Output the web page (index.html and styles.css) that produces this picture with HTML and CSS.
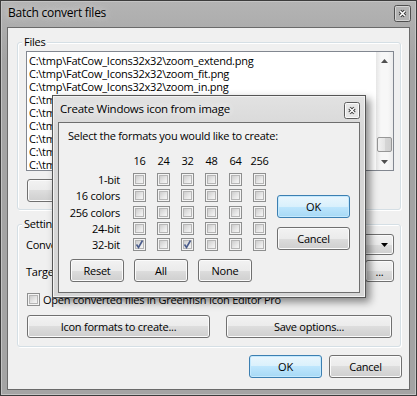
FILE: index.html
```html
<!DOCTYPE html>
<html lang="en">
<head>
    <meta charset="UTF-8">
    <title>Batch convert files</title>
    <link rel="stylesheet" href="styles.css">
</head>
<body>

<div class="window">
    <div class="titlebar">
        <span class="title">Batch convert files</span>
        <span class="close-btn">
            <svg width="17" height="17" viewBox="0 0 17 17">
                <rect x="0.5" y="0.5" width="16" height="16" rx="2" fill="#b3b3b3" stroke="#4f4f4f"/>
                <rect x="1.5" y="1.5" width="14" height="14" rx="1" fill="none" stroke="#d4d4d4"/>
                <path d="M6 6l5 5M11 6l-5 5" stroke="#3a3a3a" stroke-width="3.4"/>
                <path d="M6 6l5 5M11 6l-5 5" stroke="#fff" stroke-width="1.6"/>
            </svg>
        </span>
    </div>

    <div class="client">
        <div class="group files-group">
            <span class="group-title">Files</span>
            <div class="listbox">
                <div class="list-items">
                    <div>C:\tmp\FatCow_Icons32x32\zoom_extend.png</div>
                    <div>C:\tmp\FatCow_Icons32x32\zoom_fit.png</div>
                    <div>C:\tmp\FatCow_Icons32x32\zoom_in.png</div>
                    <div>C:\tmp\FatCow_Icons32x32\zoom_layer.png</div>
                    <div>C:\tmp\FatCow_Icons32x32\zoom_out.png</div>
                    <div>C:\tmp\FatCow_Icons32x32\zoom_refresh.png</div>
                    <div>C:\tmp\FatCow_Icons32x32\zoom_selection.png</div>
                    <div>C:\tmp\FatCow_Icons32x32\zoom_to_actual.png</div>
                    <div>C:\tmp\FatCow_Icons32x32\zones.png</div>
                </div>
                <div class="scrollbar">
                    <div class="sb-arrow">
                        <svg width="7" height="4" viewBox="0 0 7 4"><path d="M0 4L3.5 0L7 4Z" fill="#505050"/></svg>
                    </div>
                    <div class="sb-space"></div>
                    <div class="sb-thumb"></div>
                    <div class="sb-arrow">
                        <svg width="7" height="4" viewBox="0 0 7 4"><path d="M0 0L3.5 4L7 0Z" fill="#505050"/></svg>
                    </div>
                </div>
            </div>
            <div class="files-buttons">
                <button class="btn add-btn">Add files...</button>
            </div>
        </div>

        <div class="group settings-group">
            <span class="group-title">Settings</span>
            <div class="field-row">
                <span class="field-label">Convert to:</span>
                <div class="btn combo">
                    <span class="combo-text">Windows icon (*.ico)</span>
                    <svg width="7" height="4" viewBox="0 0 7 4"><path d="M0 0L3.5 4L7 0Z" fill="#000"/></svg>
                </div>
            </div>
            <div class="field-row target-row">
                <span class="field-label">Target folder:</span>
                <div class="textbox">C:\tmp\converted</div>
                <button class="btn browse-btn">...</button>
            </div>
            <div class="check-row">
                <span class="checkbox"></span>
                <span>Open converted files in Greenfish Icon Editor Pro</span>
            </div>
            <div class="settings-buttons">
                <button class="btn formats-btn">Icon formats to create...</button>
                <button class="btn save-btn">Save options...</button>
            </div>
        </div>

        <div class="footer">
            <button class="btn default">OK</button>
            <button class="btn">Cancel</button>
        </div>
    </div>

    <div class="dialog">
        <div class="dlg-titlebar">
            <span class="title">Create Windows icon from image</span>
            <span class="dlg-close">
                <svg width="16" height="17" viewBox="0 0 16 17">
                    <rect x="0.5" y="0.5" width="15" height="16" rx="2" fill="#e6e6e6" stroke="#5c5c5c"/>
                    <rect x="1.5" y="1.5" width="13" height="14" rx="1" fill="none" stroke="#fafafa"/>
                    <path d="M5.5 6l5 5M10.5 6l-5 5" stroke="#3a3a3a" stroke-width="3.2"/>
                    <path d="M5.5 6l5 5M10.5 6l-5 5" stroke="#fff" stroke-width="1.5"/>
                </svg>
            </span>
        </div>
        <div class="dlg-client">
            <div class="dlg-text">Select the formats you would like to create:</div>
            <div class="dlg-main">
                <div class="fmt-grid" id="fmtGrid">
                    <span></span>
                    <span class="col-head">16</span>
                    <span class="col-head">24</span>
                    <span class="col-head">32</span>
                    <span class="col-head">48</span>
                    <span class="col-head">64</span>
                    <span class="col-head">256</span>
                </div>
                <div class="dlg-side">
                    <button class="btn default">OK</button>
                    <button class="btn">Cancel</button>
                </div>
            </div>
            <div class="dlg-buttons">
                <button class="btn">Reset</button>
                <button class="btn">All</button>
                <button class="btn">None</button>
            </div>
        </div>
    </div>
</div>

<script>
    document.addEventListener("DOMContentLoaded", function() {
        const rows = ["1-bit", "16 colors", "256 colors", "24-bit", "32-bit"];
        const checked = { "32-bit": [0, 2] };
        const grid = document.getElementById("fmtGrid");

        rows.forEach(name => {
            let label = document.createElement("span");
            label.className = "row-label";
            label.textContent = name;
            grid.appendChild(label);

            for (let i = 0; i < 6; i++) {
                let cell = document.createElement("span");
                cell.className = "cell";
                let box = document.createElement("span");
                box.className = "checkbox";
                if ((checked[name] || []).includes(i)) {
                    box.classList.add("checked");
                    box.innerHTML = '<svg width="11" height="11" viewBox="0 0 11 11"><path d="M2.5 5.5L4.5 8.5L8.5 1.5" fill="none" stroke="#4a5c8c" stroke-width="1.6"/></svg>';
                }
                cell.appendChild(box);
                grid.appendChild(cell);
            }
        });
    });
</script>

</body>
</html>
```

FILE: styles.css
```css
body {
    margin: 0;
    font-family: 'Open Sans', 'Noto Sans', sans-serif;
    font-size: 11px;
    letter-spacing: -0.25px;
    color: #000;
    background: #fff;
}
.window {
    position: relative;
    width: 417px;
    height: 396px;
    box-sizing: border-box;
    border: 1px solid #3c3c3c;
    background: linear-gradient(#b4b4b4, #a4a4a4 60px, #a4a4a4);
    box-shadow: inset 0 0 0 1px #c4c4c4;
    padding: 0 6px 5px 6px;
    display: flex;
    flex-direction: column;
}
.titlebar {
    height: 26px;
    margin: 0 -6px;
    padding: 0 5px 0 7px;
    display: flex;
    justify-content: space-between;
    align-items: flex-start;
}
.title {
    font-size: 12px;
    line-height: 16px;
    margin-top: 4px;
    text-shadow: 0 0 6px #d4d4d4, 0 0 10px #cfcfcf;
}
.close-btn {
    margin-top: 4px;
    height: 17px;
}
.client {
    flex: 1;
    border: 1px solid #6a6a6a;
    background: #f0f0f0;
}
.group {
    border: 1px solid #d5dfe5;
    border-radius: 3px;
    box-shadow: inset 1px 1px 0 #fff, 1px 1px 0 #fff;
    margin: 14px 8px 0 9px;
    padding: 0 6px 7px 8px;
}
.group-title {
    display: block;
    width: max-content;
    margin: -9px 0 0 -4px;
    padding: 0 2px;
    line-height: 16px;
    background: #f0f0f0;
}
.listbox {
    display: flex;
    height: 120px;
    box-sizing: border-box;
    margin-top: 1px;
    border: 1px solid #828790;
    background: #fff;
}
.list-items {
    flex: 1;
    padding: 2px 0 0 2px;
    line-height: 13px;
    white-space: nowrap;
    overflow: hidden;
}
.scrollbar {
    width: 17px;
    display: flex;
    flex-direction: column;
    background: linear-gradient(90deg, #e6e6e6, #f7f7f7 30%, #f7f7f7 70%, #ececec);
}
.sb-arrow {
    height: 17px;
    display: flex;
    align-items: center;
    justify-content: center;
}
.sb-space {
    flex: 1;
}
.sb-thumb {
    height: 15px;
    margin: 0 1px 1px 1px;
    box-sizing: border-box;
    border: 1px solid #979797;
    border-radius: 2px;
    background: linear-gradient(90deg, #f2f2f2, #e4e4e4 50%, #d6d6d6 51%, #cfcfcf);
}
.btn {
    height: 23px;
    box-sizing: border-box;
    border: 1px solid #707070;
    border-radius: 3px;
    background: linear-gradient(#f2f2f2 0%, #ebebeb 50%, #dddddd 50%, #cfcfcf 100%);
    box-shadow: inset 0 0 0 1px #fbfbfb;
    font: inherit;
    letter-spacing: inherit;
    color: #000;
    padding: 0;
}
.btn.default {
    border-color: #3c7fb1;
    background: linear-gradient(#eaf6fd 0%, #d9f0fc 50%, #bee6fd 50%, #a7d9f5 100%);
    box-shadow: inset 0 0 0 1px #c4e9fe;
}
.files-buttons {
    margin-top: 8px;
    display: flex;
}
.add-btn {
    width: 110px;
    margin-left: 1px;
}
.settings-group {
    margin-top: 14px;
    padding-bottom: 8px;
}
.field-row {
    display: flex;
    align-items: center;
    margin-top: 2px;
    gap: 4px;
}
.field-label {
    width: 80px;
}
.combo {
    flex: 1;
    height: 21px;
    display: flex;
    align-items: center;
    justify-content: space-between;
    padding: 0 5px 0 5px;
}
.target-row {
    margin-top: 5px;
}
.textbox {
    flex: 1;
    height: 21px;
    box-sizing: border-box;
    border: 1px solid #abadb3;
    background: #fff;
    padding: 3px 3px 0 3px;
}
.browse-btn {
    width: 29px;
    height: 22px;
}
.check-row {
    display: flex;
    align-items: center;
    gap: 3px;
    margin: 11px 0 0 1px;
    line-height: 13px;
}
.checkbox {
    position: relative;
    display: block;
    width: 13px;
    height: 13px;
    box-sizing: border-box;
    border: 1px solid #8e8f8f;
    background: #f4f4f4;
}
.checkbox::before {
    content: "";
    position: absolute;
    left: 1px;
    top: 1px;
    width: 9px;
    height: 9px;
    box-sizing: border-box;
    border: 1px solid #b6b6b6;
    background: linear-gradient(135deg, #cdcdcd, #ececec 70%, #f4f4f4);
}
.checkbox svg {
    position: absolute;
    left: 0;
    top: 0;
}
.settings-buttons {
    display: flex;
    gap: 16px;
    margin: 9px 0 0 1px;
}
.formats-btn {
    width: 183px;
}
.save-btn {
    width: 166px;
}
.footer {
    display: flex;
    justify-content: flex-end;
    gap: 7px;
    padding: 8px 7px 0 0;
}
.footer .btn {
    width: 73px;
}

/* modal dialog over the main window */
.dialog {
    position: absolute;
    left: 51px;
    top: 94px;
    width: 314px;
    height: 203px;
    box-sizing: border-box;
    border: 1px solid #555;
    background: linear-gradient(#e2e2e2, #d6d6d6 40px, #d6d6d6);
    box-shadow: inset 0 0 0 1px #f2f2f2, 4px 4px 8px rgba(0, 0, 0, 0.45);
    padding: 0 5px 4px 5px;
    display: flex;
    flex-direction: column;
}
.dlg-titlebar {
    height: 26px;
    display: flex;
    justify-content: space-between;
    align-items: flex-start;
    padding-left: 2px;
}
.dlg-titlebar .title {
    font-size: 11.5px;
    letter-spacing: -0.25px;
    margin-top: 5px;
    text-shadow: 0 0 6px #f4f4f4, 0 0 10px #eeeeee;
}
.dlg-close {
    margin-top: 6px;
    height: 17px;
}
.dlg-client {
    flex: 1;
    border: 1px solid #6e6e6e;
    background: #f0f0f0;
    padding: 6px 0 0 9px;
}
.dlg-text {
    line-height: 14px;
}
.dlg-main {
    display: flex;
    margin-top: 10px;
}
.fmt-grid {
    display: grid;
    grid-template-columns: 60px repeat(6, 24px);
    grid-template-rows: 19px repeat(5, 16.25px);
}
.col-head {
    text-align: center;
    line-height: 16px;
    padding-right: 1px;
}
.row-label {
    text-align: right;
    padding-right: 8px;
    line-height: 16.25px;
}
.cell .checkbox {
    margin: 1px 0 0 5px;
}
.dlg-side {
    display: flex;
    flex-direction: column;
    gap: 9px;
    margin-left: 5px;
    padding-top: 42px;
}
.dlg-side .btn {
    width: 73px;
}
.dlg-buttons {
    display: flex;
    gap: 10px;
    margin: 6px 0 0 2px;
}
.dlg-buttons .btn {
    width: 54px;
}
```
